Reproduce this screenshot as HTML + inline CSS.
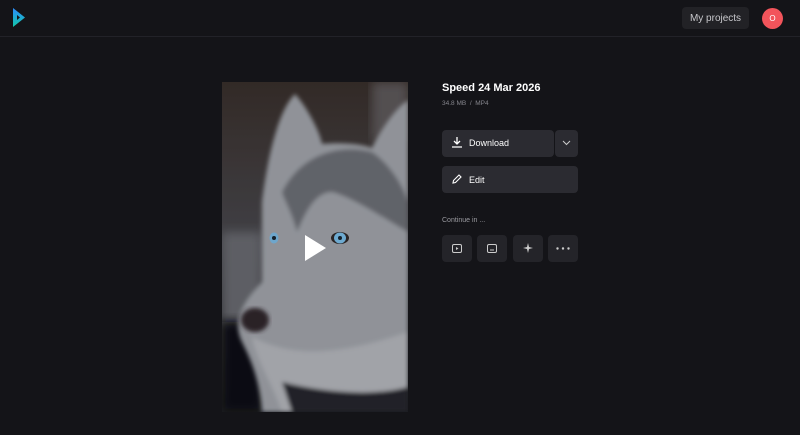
<!DOCTYPE html>
<html><head><style>
body{margin:0;width:800px;height:435px;background:#141418;font-family:"Liberation Sans",sans-serif;color:#fff;overflow:hidden;position:relative}
.hdr{position:absolute;left:0;top:0;width:800px;height:36px;border-bottom:1px solid #222228}
.btn{position:absolute;background:#2b2b31;border-radius:4px}
.sq{position:absolute;top:235px;width:30px;height:27px;background:#242429;border-radius:4px}
</style></head><body>
<div class="hdr">
<svg style="position:absolute;left:13px;top:8px" width="12" height="19" viewBox="0 0 12 19"><defs><linearGradient id="g" x1="0" y1="0" x2="0" y2="1"><stop offset="0" stop-color="#2b8cff"/><stop offset="1" stop-color="#13c8a8"/></linearGradient></defs><path d="M0 0 L12 9.5 L0 19 Z M4 7 L4 12 L7 9.5 Z" fill="url(#g)" fill-rule="evenodd"/></svg>
<div style="position:absolute;left:682px;top:7px;width:67px;height:22px;background:#222226;border-radius:4px;color:#c8c8cc;font-size:10px;line-height:23px;text-align:center"><span style="position:relative;top:0">My projects</span></div>
<div style="position:absolute;left:762px;top:8px;width:21px;height:21px;background:#f2545b;border-radius:50%;font-size:8px;line-height:21px;text-align:center">O</div>
</div>
<svg style="position:absolute;left:222px;top:82px" width="186" height="330" viewBox="0 0 186 330">
<defs><linearGradient id="bg" x1="0" y1="0" x2="0" y2="1"><stop offset="0" stop-color="#3a302c"/><stop offset=".5" stop-color="#4a4a50"/><stop offset="1" stop-color="#1b1d22"/></linearGradient>
<filter id="b"><feGaussianBlur stdDeviation="5"/></filter><filter id="b2"><feGaussianBlur stdDeviation="2"/></filter></defs>
<rect width="186" height="330" fill="url(#bg)"/>
<rect x="0" y="150" width="40" height="90" fill="#6a6c72" filter="url(#b)"/>
<rect x="0" y="240" width="40" height="90" fill="#0f1014" filter="url(#b)"/>
<rect x="150" y="0" width="36" height="60" fill="#5e5a5c" filter="url(#b)"/>
<g filter="url(#b2)">
<path d="M40 120 C45 80 55 30 73 12 C85 25 98 50 100 62 C120 60 140 62 150 66 C160 45 175 25 186 18 L186 330 L40 330 C38 300 30 280 20 260 C10 240 20 220 40 200 Z" fill="#a4a7ae"/>
<path d="M60 110 C80 70 120 62 150 70 C165 80 180 100 186 120 L186 150 C160 135 130 115 110 110 C90 110 80 140 75 150 C70 130 62 118 60 110Z" fill="#6e7178"/>
<path d="M30 255 C60 270 100 280 186 250 L186 330 L60 330 C50 300 35 280 30 255Z" fill="#b8bac0"/>
<path d="M60 300 C100 310 150 315 186 305 L186 330 L70 330Z" fill="#25272d"/>
</g>
<rect width="186" height="330" fill="#000" opacity="0.12"/>
<ellipse cx="52" cy="156" rx="4.5" ry="5.5" fill="#6ea6cc"/><circle cx="52" cy="156" r="2" fill="#15202a"/>
<ellipse cx="118" cy="156" rx="9" ry="6" fill="#2a2424"/><ellipse cx="118" cy="156" rx="6" ry="5.5" fill="#6eaad0"/><circle cx="118" cy="156" r="2" fill="#15202a"/>
<ellipse cx="33" cy="238" rx="14" ry="12" fill="#2a2226" filter="url(#b2)"/>
<path d="M83 153 L83 179 L104 166 Z" fill="#fff"/>
</svg>
<div style="position:absolute;left:442px;top:82px;font-size:11px;font-weight:bold">Speed 24 Mar 2026</div>
<div style="position:absolute;left:442px;top:100px;font-size:6.5px;color:#85858c">34.8 MB &nbsp;/&nbsp; MP4</div>
<div class="btn" style="left:442px;top:130px;width:112px;height:27px"></div>
<div class="btn" style="left:555px;top:130px;width:23px;height:27px"></div>
<svg style="position:absolute;left:452px;top:137px" width="10" height="11" viewBox="0 0 10 11"><path d="M5 0 V7 M2 4 L5 7 L8 4 M0 10 H10" stroke="#fff" stroke-width="1.3" fill="none"/></svg>
<div style="position:absolute;left:469px;top:138px;font-size:9px">Download</div>
<svg style="position:absolute;left:562px;top:140px" width="9" height="6"><path d="M1 1 L4.5 4.5 L8 1" stroke="#ccc" fill="none"/></svg>
<div class="btn" style="left:442px;top:166px;width:136px;height:27px"></div>
<svg style="position:absolute;left:452px;top:174px" width="10" height="10" viewBox="0 0 10 10"><path d="M1 9 L1.5 6.5 L7 1 L9 3 L3.5 8.5 Z" stroke="#fff" stroke-width="1.1" fill="none"/></svg>
<div style="position:absolute;left:469px;top:175px;font-size:9px">Edit</div>
<div style="position:absolute;left:442px;top:217px;font-size:7px;color:#9a9aa0">Continue in ...</div>
<div class="sq" style="left:442px"></div><div class="sq" style="left:477px"></div><div class="sq" style="left:513px"></div><div class="sq" style="left:548px"></div>
<svg style="position:absolute;left:452px;top:244px" width="10" height="9"><rect x=".5" y=".5" width="9" height="8" rx="1.5" stroke="#ccc" fill="none"/><path d="M4 3 L6.5 4.5 L4 6Z" fill="#ccc"/></svg>
<svg style="position:absolute;left:487px;top:244px" width="10" height="9"><rect x=".5" y=".5" width="9" height="8" rx="1.5" stroke="#ccc" fill="none"/><path d="M3 6 H7" stroke="#ccc"/></svg>
<svg style="position:absolute;left:523px;top:243px" width="10" height="10"><path d="M5 0 L6 4 L10 5 L6 6 L5 10 L4 6 L0 5 L4 4Z" fill="#ccc"/></svg>
<svg style="position:absolute;left:556px;top:247px" width="14" height="3"><circle cx="1.5" cy="1.5" r="1.2" fill="#ccc"/><circle cx="7" cy="1.5" r="1.2" fill="#ccc"/><circle cx="12.5" cy="1.5" r="1.2" fill="#ccc"/></svg>
</body></html>
